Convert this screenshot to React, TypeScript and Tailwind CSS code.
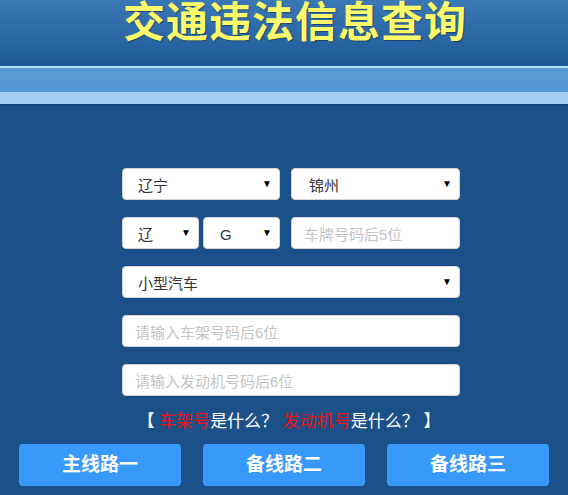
import React from "react";

const font = { fontFamily: '"Liberation Sans", "Noto Sans CJK SC", sans-serif' };

function FakeSelect({ value, className = "", textPad = "pl-[15px]" }: { value: string; className?: string; textPad?: string }) {
  return (
    <div
      className={`flex h-[32px] items-center justify-between rounded-[4px] border border-[#d4d4d4] bg-white pr-[7px] ${textPad} ${className}`}
    >
      <span className="pt-[5px] text-[15px] text-[#333]">{value}</span>
      <span className="text-[10px] leading-none text-black">▼</span>
    </div>
  );
}

function TextField({ placeholder, className = "" }: { placeholder: string; className?: string }) {
  return (
    <input
      type="text"
      placeholder={placeholder}
      className={`h-[32px] rounded-[4px] border border-[#d4d4d4] bg-white px-[12px] pt-[3px] text-[15px] text-[#333] outline-none placeholder:text-[#c4c4c4] ${className}`}
    />
  );
}

export default function App() {
  const routes = ["主线路一", "备线路二", "备线路三"];

  return (
    <div className="h-[495px] w-[568px] overflow-hidden bg-[#1b5089]" style={font}>
      {/* header */}
      <div className="h-[66px] bg-gradient-to-b from-[#3b78b6] to-[#1f5a97] pl-[22px] text-center">
        <h1
          className="text-[42px] font-bold leading-[46px] tracking-[1px] text-[#fdfb6a]"
          style={{ textShadow: "1px 1px 1px rgba(0,0,0,0.35)" }}
        >
          交通违法信息查询
        </h1>
      </div>
      <div className="h-[2px] bg-[#b3e6f3]" />
      <div className="h-[24px] bg-gradient-to-b from-[#5b9ad3] to-[#5598d8]" />
      <div className="h-[12px] bg-[#a4cdf5]" />
      <div className="h-[2px] bg-[#15457a]" />

      {/* form */}
      <div className="ml-[122px] mt-[62px] flex w-[338px] flex-col gap-[17px]">
        <div className="flex gap-[11px]">
          <FakeSelect value="辽宁" className="w-[158px]" />
          <FakeSelect value="锦州" className="w-[169px]" textPad="pl-[17px]" />
        </div>
        <div className="flex gap-[11px]">
          <div className="flex w-[158px] gap-[4px]">
            <FakeSelect value="辽" className="w-[77px]" />
            <FakeSelect value="G" className="w-[77px]" textPad="pl-[16px]" />
          </div>
          <TextField placeholder="车牌号码后5位" className="w-[169px]" />
        </div>
        <FakeSelect value="小型汽车" className="w-[338px]" />
        <TextField placeholder="请输入车架号码后6位" className="w-[338px]" />
        <TextField placeholder="请输入发动机号码后6位" className="w-[338px]" />
      </div>

      <p className="mt-[13px] pl-[10px] text-center text-[17px] leading-[25px] text-white">
        【 <span className="text-[#ee1111]">车架号</span>是什么？ <span className="text-[#ee1111]">发动机号</span>是什么？ 】
      </p>

      {/* routes */}
      <div className="mt-[10px] flex justify-center gap-[22px]">
        {routes.map((r) => (
          <button
            key={r}
            className="h-[42px] w-[162px] rounded-[4px] bg-[#3899fb] text-[19px] font-bold text-white"
          >
            {r}
          </button>
        ))}
      </div>
    </div>
  );
}
